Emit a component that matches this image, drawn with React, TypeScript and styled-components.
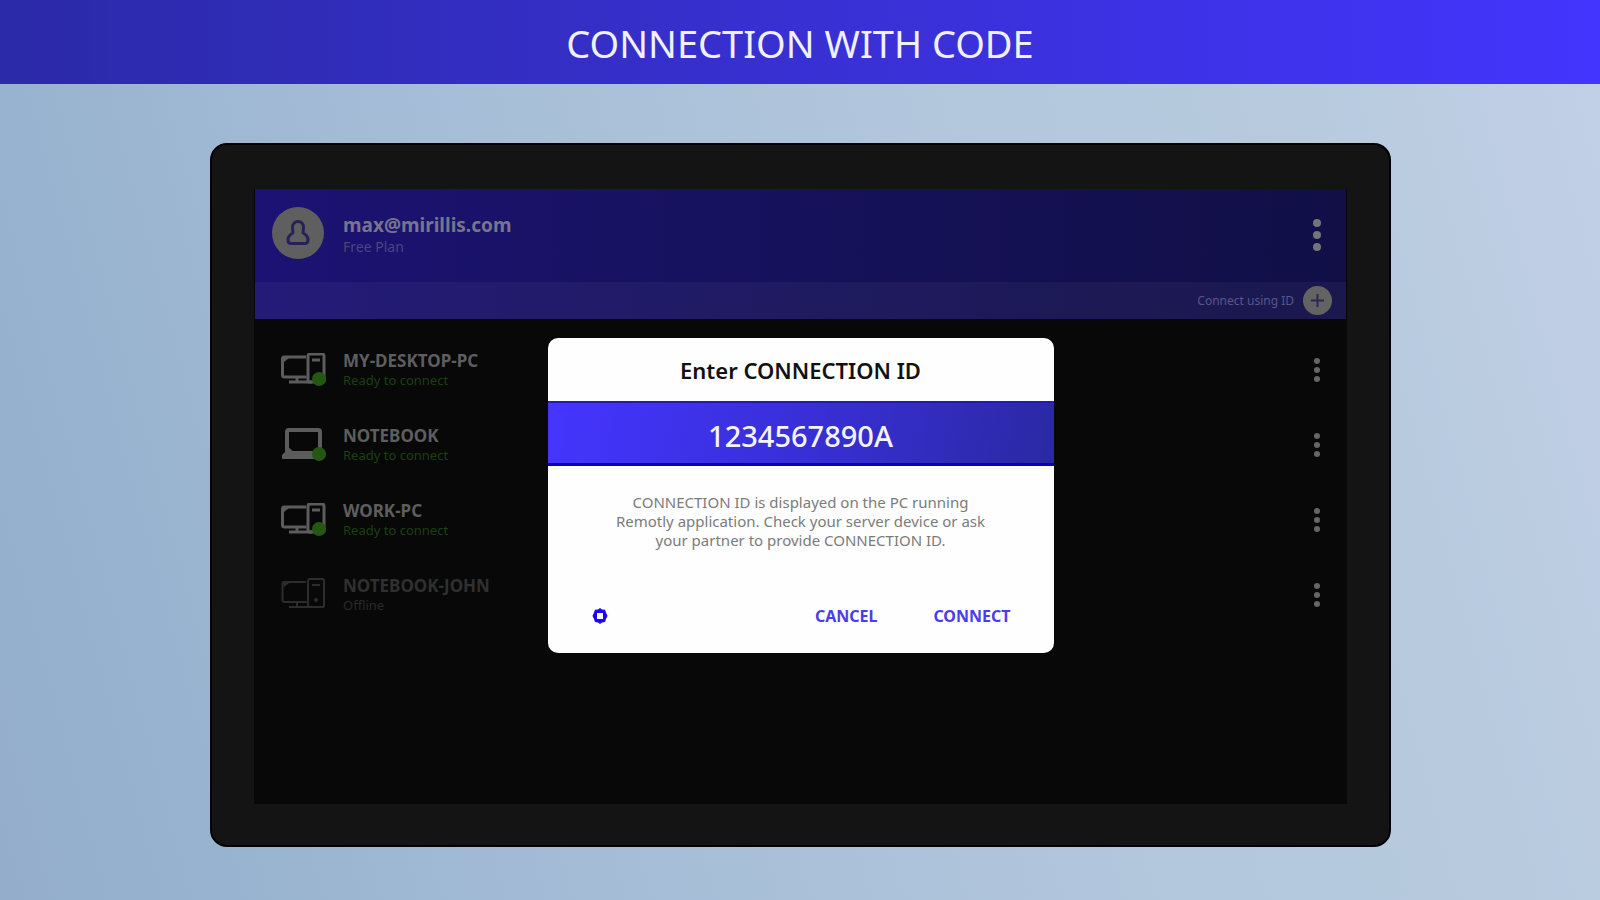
import React from "react";
import styled, { createGlobalStyle } from "styled-components";

const GlobalStyle = createGlobalStyle`
  *, *::before, *::after { box-sizing: border-box; }
  body { margin: 0; font-family: "Noto Sans", "Open Sans", sans-serif; }
  h1, h2, p, ul { margin: 0; padding: 0; }
  button, input { font-family: inherit; border: 0; }
  button { background: none; padding: 0; cursor: pointer; }
`;

const Page = styled.div`
  min-height: 100vh;
  display: flex;
  flex-direction: column;
  background: linear-gradient(75deg, #93adcb 0%, #98b3cf 12%, #a6bdd7 35%, #b3c8dd 65%, #b7cade 82%, #c3d0e7 100%);
`;

const Banner = styled.header`
  height: 84px;
  display: flex;
  align-items: center;
  justify-content: center;
  padding-top: 2px;
  background: linear-gradient(90deg, #2b2aa8, #3830d2 50%, #4335fd);
`;

const BannerTitle = styled.h1`
  color: #f1f0ff;
  font-size: 38px;
  line-height: 48px;
  font-weight: 400;
`;

const Stage = styled.main`
  flex: 1;
  display: flex;
  padding: 59px 209px 53px 210px;
`;

const Device = styled.div`
  flex: 1;
  display: flex;
  padding: 44px 42px 41px;
  border: 2px solid #020202;
  border-radius: 17px;
  background: #141414;
`;

const Screen = styled.div`
  position: relative;
  flex: 1;
  display: flex;
  flex-direction: column;
  background: #080808;
`;

const ScreenHeader = styled.div`
  margin: 0 1px;
  background: linear-gradient(90deg, #1c1274, #17125f 40%, #110f46);
`;

const AccountBar = styled.div`
  height: 93px;
  display: flex;
  align-items: flex-start;
  gap: 19px;
  padding: 18px 15px 0 17px;
`;

const Avatar = styled.div`
  width: 52px;
  height: 52px;
  flex: none;
  border-radius: 50%;
  background: #5f5f5f;
  display: grid;
  place-items: center;
`;

const TextColumn = styled.div`
  flex: 1;
`;

const Email = styled.div`
  color: #77758c;
  font-size: 19px;
  line-height: 26px;
  padding-top: 5px;
  font-weight: 700;
`;

const Plan = styled.div`
  color: #494680;
  font-size: 14px;
  line-height: 18px;
`;

const ConnectBar = styled.div`
  height: 37px;
  display: flex;
  align-items: center;
  justify-content: flex-end;
  padding-right: 14px;
  background: rgba(255, 255, 255, 0.04);
`;

const ConnectUsingId = styled.button`
  display: flex;
  align-items: center;
  gap: 9px;
  color: #5a578a;
  font-size: 12px;
  line-height: 18px;
`;

const PlusCircle = styled.span`
  width: 29px;
  height: 29px;
  border-radius: 50%;
  background: #636363;
  display: grid;
  place-items: center;
`;

const MenuButton = styled.button<{ $large?: boolean }>`
  width: 29px;
  height: ${(p) => (p.$large ? 56 : 40)}px;
  display: grid;
  place-items: center;
`;

const DeviceList = styled.ul`
  list-style: none;
  padding: 13px 16px 0 27px;
`;

const DeviceRow = styled.li`
  height: 75px;
  display: flex;
  align-items: center;
  gap: 17px;
`;

const IconBox = styled.div`
  position: relative;
  width: 45px;
  height: 33px;
  flex: none;
`;

const StatusDot = styled.span`
  position: absolute;
  right: 0;
  bottom: 0;
  width: 14px;
  height: 14px;
  border-radius: 50%;
  background: #245812;
`;

const DeviceName = styled.div<{ $offline?: boolean }>`
  color: ${(p) => (p.$offline ? "#303030" : "#5e5e5e")};
  font-size: 17px;
  line-height: 20px;
  font-weight: 700;
`;

const DeviceStatus = styled.div<{ $offline?: boolean }>`
  color: ${(p) => (p.$offline ? "#2a2a2a" : "#1b400f")};
  font-size: 13px;
  line-height: 18px;
`;

const Overlay = styled.div`
  position: absolute;
  inset: 0;
  display: flex;
  align-items: center;
  justify-content: center;
  padding-bottom: 3px;
`;

const Dialog = styled.form`
  width: 506px;
  overflow: hidden;
  border-radius: 10px;
  background: #fefefe;
`;

const DialogTitle = styled.label`
  display: block;
  color: #111;
  font-size: 22px;
  line-height: 30px;
  padding: 17px 0 16px;
  text-align: center;
  font-weight: 600;
`;

const IdInput = styled.input`
  display: block;
  width: 100%;
  height: 65px;
  padding: 5px 0 0;
  border-top: 2px solid #251ab5;
  border-bottom: 3px solid #0b00b8;
  border-radius: 0;
  background: linear-gradient(100deg, #4535ff, #392fd8 50%, #2a29a3);
  color: #f4f3ff;
  font-size: 29px;
  font-weight: 500;
  text-align: center;
  outline: none;
`;

const Description = styled.p`
  padding: 27px 60px 0;
  color: #7b7b7b;
  font-size: 15px;
  line-height: 19px;
  text-align: center;
`;

const Actions = styled.div`
  display: flex;
  align-items: center;
  gap: 56px;
  padding: 54px 43px 25px 43px;
`;

const SettingsButton = styled.button`
  width: 18px;
  height: 18px;
  margin-right: auto;
  display: grid;
  place-items: center;
`;

const ActionButton = styled.button`
  color: #4a3cf0;
  font-size: 16px;
  line-height: 24px;
  font-weight: 700;
`;

function Dots({ large }: { large?: boolean }) {
  const r = large ? 4 : 3;
  const step = large ? 12 : 9;
  return (
    <svg width="8" height="34" viewBox="-4 -17 8 34" fill={large ? "#74747c" : "#666"} aria-hidden="true">
      <circle cy={-step} r={r} />
      <circle r={r} />
      <circle cy={step} r={r} />
    </svg>
  );
}

function DesktopIcon({ offline }: { offline?: boolean }) {
  const color = offline ? "#2d2d2d" : "#5c5c5c";
  return (
    <svg width="45" height="33" viewBox="0 0 45 33" fill="none" stroke={color} strokeWidth={offline ? 2 : 3} aria-hidden="true">
      <path d="M25 4H3Q1.500 4 1.500 6v16q0 2 2 2h22" />
      <path d="M16 24v5M8 29h23" />
      <path d="M2 5h6l-5 4z" fill={color} stroke="none" />
      <path d="M27 29V3q0-2 2-2h12q2 0 2 2v25q0 1-1 1H27" />
      <path d="M31 7h8" />
      {offline && <circle cx="35" cy="22" r="2" fill={color} stroke="none" />}
    </svg>
  );
}

function LaptopIcon() {
  return (
    <svg width="45" height="33" viewBox="0 0 45 33" fill="none" stroke="#5c5c5c" strokeWidth="4" aria-hidden="true">
      <path d="M6 25V4q0-2 2-2h29q2 0 2 2v18" />
      <path d="M5 17l9 8H5z" fill="#5c5c5c" stroke="none" />
      <path d="M5 23h28v8H2q-1 0-1-1v-3z" fill="#5c5c5c" stroke="none" />
    </svg>
  );
}

function UserIcon() {
  return (
    <svg width="24" height="28" viewBox="0 0 24 28" fill="none" stroke="#262158" strokeWidth="3" strokeLinejoin="round" aria-hidden="true">
      <path d="M12 2.500C8.500 2.500 6.500 5 6.500 8.500c0 2.500.7 3.500.3 5.500C4 15.500 2 18 2 21c0 2 1 3.500 3 3.500h14c2 0 3-1.500 3-3.500 0-3-2-5.500-4.800-7-.4-2 .3-3 .3-5.500 0-3.500-2-6-5.500-6z" />
    </svg>
  );
}

function PlusIcon() {
  return (
    <svg width="15" height="15" viewBox="0 0 15 15" stroke="#2c2a4c" strokeWidth="2" aria-hidden="true">
      <path d="M7.500 1v13M1 7.500h13" />
    </svg>
  );
}

function GearIcon() {
  return (
    <svg width="18" height="18" viewBox="0 0 18 18" aria-hidden="true">
      <path
        fill="#1d06f5"
        fillRule="evenodd"
        d="M9 1l2 1.500 3 .2 1 2.800L16.500 9 15 12l-1 3-3 .5L9 17l-2-1.500L4 15l-1-3L1.500 9 3 5.500l1-2.800 3-.2zM6 6v6h6V6z"
      />
    </svg>
  );
}

type Machine = { name: string; status: string; kind: "desktop" | "laptop"; offline?: boolean };

const machines: Machine[] = [
  { name: "MY-DESKTOP-PC", status: "Ready to connect", kind: "desktop" },
  { name: "NOTEBOOK", status: "Ready to connect", kind: "laptop" },
  { name: "WORK-PC", status: "Ready to connect", kind: "desktop" },
  { name: "NOTEBOOK-JOHN", status: "Offline", kind: "desktop", offline: true },
];

export default function App() {
  return (
    <Page>
      <GlobalStyle />
      <Banner>
        <BannerTitle>CONNECTION WITH CODE</BannerTitle>
      </Banner>
      <Stage>
        <Device>
          <Screen>
            <ScreenHeader>
              <AccountBar>
                <Avatar>
                  <UserIcon />
                </Avatar>
                <TextColumn>
                  <Email>max@mirillis.com</Email>
                  <Plan>Free Plan</Plan>
                </TextColumn>
                <MenuButton $large type="button" aria-label="Account menu">
                  <Dots large />
                </MenuButton>
              </AccountBar>
              <ConnectBar>
                <ConnectUsingId type="button">
                  Connect using ID
                  <PlusCircle>
                    <PlusIcon />
                  </PlusCircle>
                </ConnectUsingId>
              </ConnectBar>
            </ScreenHeader>
            <DeviceList>
              {machines.map((m) => (
                <DeviceRow key={m.name}>
                  <IconBox>
                    {m.kind === "laptop" ? <LaptopIcon /> : <DesktopIcon offline={m.offline} />}
                    {!m.offline && <StatusDot />}
                  </IconBox>
                  <TextColumn>
                    <DeviceName $offline={m.offline}>{m.name}</DeviceName>
                    <DeviceStatus $offline={m.offline}>{m.status}</DeviceStatus>
                  </TextColumn>
                  <MenuButton type="button" aria-label={`${m.name} menu`}>
                    <Dots />
                  </MenuButton>
                </DeviceRow>
              ))}
            </DeviceList>
            <Overlay>
              <Dialog role="dialog" aria-labelledby="dialog-title" onSubmit={(e) => e.preventDefault()}>
                <DialogTitle id="dialog-title" htmlFor="connection-id">
                  Enter CONNECTION ID
                </DialogTitle>
                <IdInput id="connection-id" defaultValue="1234567890A" />
                <Description>
                  CONNECTION ID is displayed on the PC running
                  <br />
                  Remotly application. Check your server device or ask
                  <br />
                  your partner to provide CONNECTION ID.
                </Description>
                <Actions>
                  <SettingsButton type="button" aria-label="Settings">
                    <GearIcon />
                  </SettingsButton>
                  <ActionButton type="button">CANCEL</ActionButton>
                  <ActionButton type="submit">CONNECT</ActionButton>
                </Actions>
              </Dialog>
            </Overlay>
          </Screen>
        </Device>
      </Stage>
    </Page>
  );
}
